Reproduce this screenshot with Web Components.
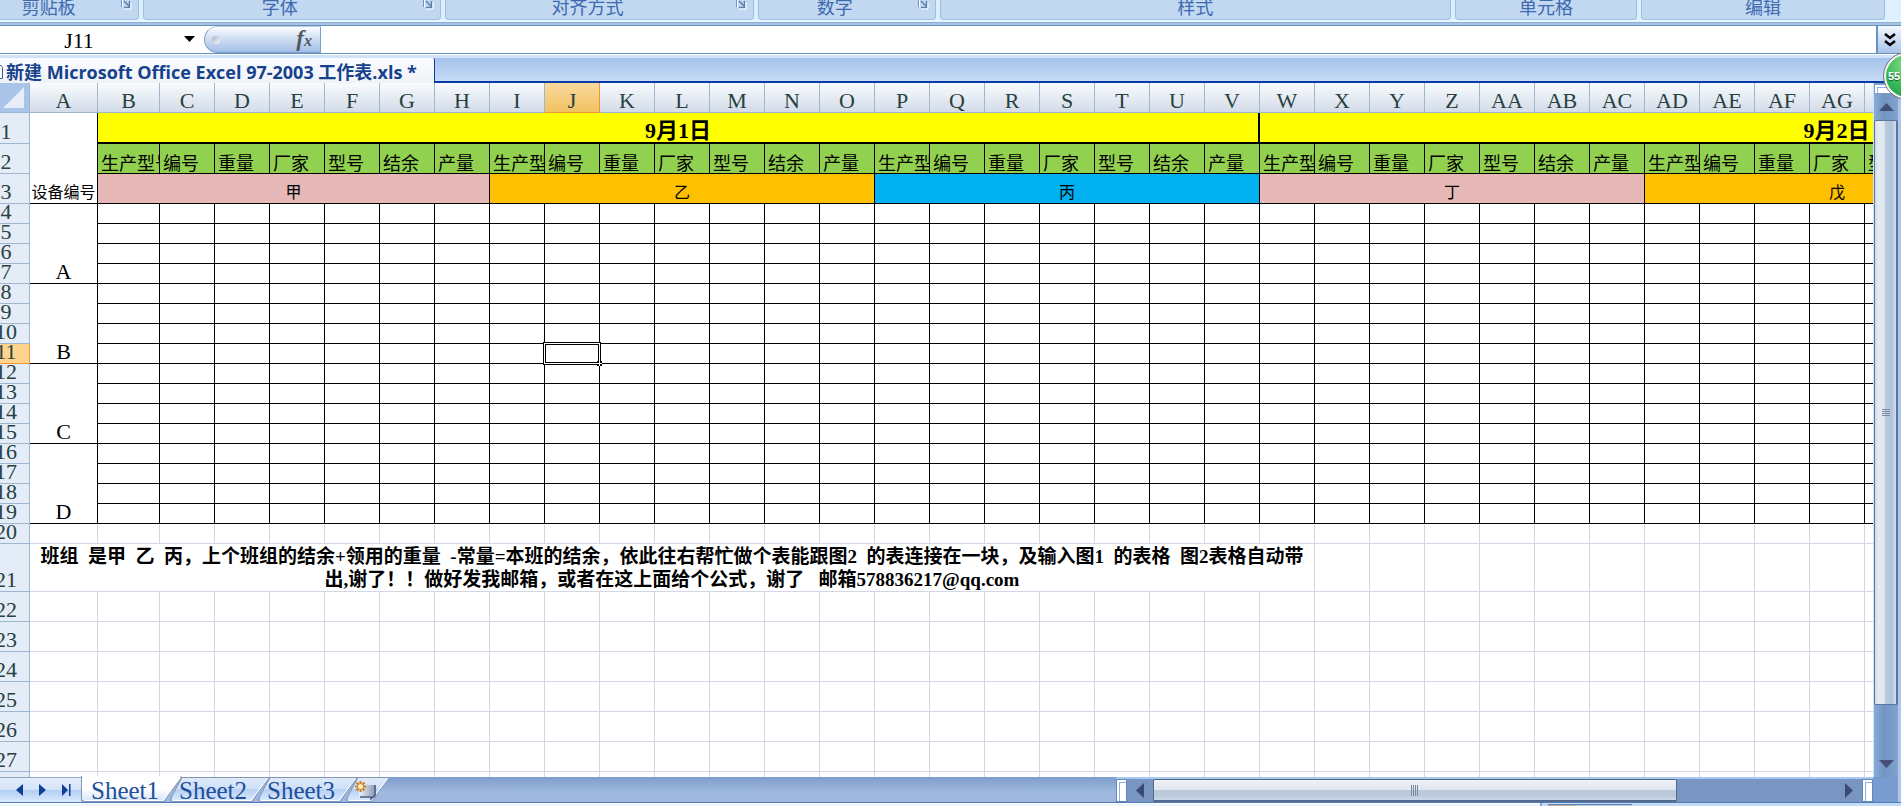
<!DOCTYPE html>
<html lang="zh-CN">
<head>
<meta charset="utf-8">
<title>Excel</title>
<style>
  html, body { height: 100%; margin: 0; }
  body {
    overflow: hidden;
    font-family: "Liberation Serif", "Noto Sans CJK SC", serif;
    font-size: 22px;
    --line: #6593bc;
    --navy: #15428b;
  }
</style>
</head>
<body>
<xl-window>
  <xl-ribbon slot="top">
    <xl-group launcher style="flex-grow: 155">剪贴板</xl-group>
    <xl-group launcher style="flex-grow: 299">字体</xl-group>
    <xl-group launcher style="flex-grow: 310">对齐方式</xl-group>
    <xl-group launcher style="flex-grow: 177">数字</xl-group>
    <xl-group style="flex-grow: 514">样式</xl-group>
    <xl-group style="flex-grow: 182">单元格</xl-group>
    <xl-group style="flex-grow: 244">编辑</xl-group>
  </xl-ribbon>
  <xl-formula-bar slot="top" cell="J11"></xl-formula-bar>
  <xl-doc-tabs slot="top">新建 Microsoft Office Excel 97-2003 工作表.xls *</xl-doc-tabs>
  <xl-grid slot="main"></xl-grid>
  <xl-scroll-y slot="main"></xl-scroll-y>
  <xl-sheet-bar slot="bottom"></xl-sheet-bar>
  <xl-status slot="bottom"></xl-status>
  <xl-badge slot="over">55</xl-badge>
</xl-window>

<script>
class XlElement extends HTMLElement {
  constructor() {
    super();
    this.attachShadow({ mode: 'open' });
    this.shadowRoot.innerHTML = `<style>
      *, :host { box-sizing: border-box; }
      button, input { font: inherit; color: inherit; margin: 0; padding: 0; border: 0; background: none; border-radius: 0; outline: 0; }
      svg { display: block; flex: none; }
    </style>` + this.render();
  }
}

customElements.define('xl-window', class extends XlElement {
  render() {
    return `
    <style>
      :host { display: flex; flex-direction: column; height: 100vh; position: relative; overflow: hidden; background: #afc8ec; }
      .main { flex: 1; min-height: 0; display: flex; overflow: hidden; }
    </style>
    <slot name="top"></slot>
    <div class="main"><slot name="main"></slot></div>
    <slot name="bottom"></slot>
    <slot name="over"></slot>`;
  }
});

customElements.define('xl-ribbon', class extends XlElement {
  render() {
    return `
    <style>
      :host {
        display: flex; gap: 4px; height: 25px; padding: 0 16px 5px 0; margin-left: -17px; flex: none;
        background: linear-gradient(#def0fd 0 20px, #e8f7ff 20px 22px, #8fb0d4 22px 23px, #a9c1e2 23px);
      }
    </style>
    <slot></slot>`;
  }
});

customElements.define('xl-group', class extends XlElement {
  render() {
    return `
    <style>
      :host {
        display: flex; flex: 1 1 0; min-width: 0; height: 20px;
        background: #c1d8f0; border: 1px solid #9dbfdf; border-top: 0; border-radius: 0 0 4px 4px;
        color: #3e6ab0; font: 18px/26px "Noto Sans CJK SC", sans-serif;
      }
      span { flex: 1; text-align: center; margin-top: -7px; white-space: nowrap; }
      button { display: none; width: 24px; padding: 0 0 0 6px; }
      :host([launcher]) button { display: block; }
    </style>
    <span><slot></slot></span>
    <button aria-label="launcher"><svg width="12" height="20" viewBox="0 0 12 20">
      <path d="M1.5 0v7" stroke="#6d93c4" fill="none"/><path d="M2.500 0v7" stroke="#fff"/>
      <path d="M4 1l5 5M9.500 1v6.500H4" stroke="#5c80aa" fill="none" stroke-width="1.500"/>
      <path d="M11 2v7H4" stroke="#fff" fill="none"/>
    </svg></button>`;
  }
});

customElements.define('xl-formula-bar', class extends XlElement {
  render() {
    return `
    <style>
      :host {
        display: flex; height: 33px; flex: none; background: #fff;
        border-top: 1px solid var(--line); border-bottom: 3px solid #cfe2f8;
        box-shadow: inset 0 -1px #fff, inset 0 -2px var(--line);
        padding-bottom: 2px;
      }
      .name { width: 158px; padding-top: 3px; text-align: center; }
      .drop { width: 46px; padding-left: 26px; }
      .fx {
        width: 117px; display: flex; align-items: center; justify-content: space-between; padding: 0 8px 0 7px;
        border: 1px solid #7d9fc9; border-top-color: #b6cbe6; border-radius: 14px 0 0 14px;
        background: linear-gradient(#fbfdff, #d5e2f4 40%, #a3bfe8);
      }
      .dot { width: 8px; height: 8px; border-radius: 50%; background: linear-gradient(135deg, #aab3c2, #f5f8fc); }
      i { font: italic bold 23px/24px "Liberation Serif", serif; color: #54585f; }
      i small { font-size: 16px; }
      .text { flex: 1; min-width: 0; }
      .more { width: 25px; padding-left: 6px; border-left: 2px solid var(--line); background: linear-gradient(#f4f8fe, #a9c3ea); }
    </style>
    <input class="name" aria-label="Name box" value="${this.getAttribute('cell')}">
    <button class="drop" aria-label="Names"><svg width="12" height="7"><path d="M0 0h11L5.500 6z"/></svg></button>
    <button class="fx" aria-label="Insert function"><span class="dot"></span><i>f<small>x</small></i></button>
    <input class="text" aria-label="Formula">
    <button class="more" aria-label="Expand"><svg width="12" height="14" viewBox="0 0 12 14">
      <path d="M1 1l5 4 5-4M1 8l5 4 5-4" fill="none" stroke="#000" stroke-width="2.500"/></svg></button>`;
  }
});

customElements.define('xl-doc-tabs', class extends XlElement {
  render() {
    return `
    <style>
      :host { display: flex; height: 25px; flex: none; background: linear-gradient(#a6c3ec, #c6daf4 23px, #0a3ca8 23px); }
      a {
        display: flex; align-items: center; gap: 3px; padding: 3px 17px 0 0; white-space: nowrap; text-decoration: none;
        background: linear-gradient(#fafcff, #f0f2f8); border-right: 1px solid #0a3ca8; border-top-right-radius: 2px;
        color: var(--navy); font: bold 18px/22px "Open Sans", "Noto Sans CJK SC", sans-serif;
      }
    </style>
    <a href="#"><svg width="3" height="16"><path d="M0 1.500h1l1.500 2v11H0" fill="#fff" stroke="#3c5a8c"/></svg><slot></slot></a>`;
  }
});

const letters = n => n < 26 ? String.fromCharCode(65 + n) : 'A' + String.fromCharCode(39 + n);
const FIELDS = ['生产型号', '编号', '重量', '厂家', '型号', '结余', '产量'];
const TEAMS = [['甲', 'pink'], ['乙', 'gold'], ['丙', 'blue'], ['丁', 'pink'], ['戊', 'gold'], ['己', 'blue']];
const COLS = 43;

customElements.define('xl-grid', class extends XlElement {
  render() {
    const times = (n, fn) => Array.from({ length: n }, (_, i) => fn(i)).join('');
    const rowHead = r => `<th scope="row"${r === 11 ? ' class="on"' : ''}>${r}</th>`;

    let body = `<tr class="tall r1">${rowHead(1)}<td class="dev" rowspan="3">设备编号</td>
      <td class="day" colspan="21">9月1日</td><td class="day" colspan="21">9月2日</td></tr>`;
    body += `<tr class="tall">${rowHead(2)}${times(42, i => `<td class="field">${FIELDS[i % 7]}</td>`)}</tr>`;
    body += `<tr class="tall">${rowHead(3)}${TEAMS.map(([t, c]) => `<td class="team ${c}" colspan="7">${t}</td>`).join('')}</tr>`;

    // machines A-D, four rows each
    for (let r = 4; r < 20; r++) {
      const first = r % 4 === 0 ? `<td class="machine" rowspan="4">${'ABCD'[r / 4 - 1]}</td>` : '';
      body += `<tr class="ruled">${rowHead(r)}${first}${times(42, i => r === 11 && i === 8
        ? '<td class="cursor"><span></span></td>' : '<td></td>')}</tr>`;
    }

    body += `<tr>${rowHead(20)}${times(COLS, () => '<td></td>')}</tr>`;
    body += `<tr class="note">${rowHead(21)}<td colspan="23">班组&nbsp; 是甲&nbsp; 乙&nbsp; 丙，上个班组的结余+领用的重量&nbsp; -常量=本班的结余，依此往右帮忙做个表能跟图2&nbsp; 的表连接在一块，及输入图1&nbsp; 的表格&nbsp; 图2表格自动带<br>出,谢了！！做好发我邮箱，或者在这上面给个公式，谢了&nbsp;&nbsp; 邮箱578836217@qq.com</td>${times(20, () => '<td></td>')}</tr>`;
    for (let r = 22; r < 29; r++) {
      body += `<tr class="tall">${rowHead(r)}${times(COLS, () => '<td></td>')}</tr>`;
    }

    return `
    <style>
      :host { display: block; flex: 1; min-width: 0; overflow: hidden; background: #fff; }
      table { table-layout: fixed; border-collapse: separate; border-spacing: 0; width: 0; margin-left: -17px; }
      .c0 { width: 47px; } .c1 { width: 68px; } .c2 { width: 62px; } .c { width: 55px; }
      th, td {
        height: 20px; padding: 0 0 3px; border: solid #d0d7e5; border-width: 0 1px 1px 0;
        line-height: 16px; vertical-align: bottom; white-space: nowrap; overflow: hidden;
      }
      th { font-weight: normal; color: #27413e; }
      thead th { height: 30px; border-color: #9eb6ce; background: linear-gradient(#f9fcfd, #d3dbe9); }
      thead th:first-child { background: #a9c4e9; padding: 0 4px 3px 0; }
      thead svg { margin-left: auto; }
      tbody th { border-color: #9eb6ce; background: #e4ecf7; }
      thead th.on { background: linear-gradient(#f9d99f, #f1c15f); border-color: #f29536; }
      tbody th.on { background: #ffd58d; border-color: #f29536; }
      .tall > * { height: 30px; }
      .r1 > * { height: 31px; }
      .dev, .machine { border-color: #000; text-align: center; }
      .dev { font-size: 16px; padding-bottom: 2px; }
      .day { background: #ff0; border: solid #000; border-width: 0 2px 2px 0; font-weight: bold; text-align: center; }
      .field { background: #92d050; border-color: #000; font-size: 18px; padding: 0 0 1px 3px; }
      .team { border-color: #000; font-size: 16px; text-align: center; padding-bottom: 2px; }
      .pink { background: #e6b8b7; }
      .gold { background: #ffc000; }
      .blue { background: #00b0f0; }
      .ruled td { border-color: #000; }
      .note th { height: 48px; }
      .note td { font-size: 19px; }
      .note td:nth-child(2) { font-weight: bold; line-height: 23px; padding: 1px 0 0; text-align: center; vertical-align: top; }
      .cursor { position: relative; overflow: visible; }
      .cursor span { position: absolute; inset: -2px; border: 3px double #000; background: #fff; }
      .cursor span::after {
        content: ""; position: absolute; right: -4px; bottom: -4px; width: 5px; height: 5px;
        background: linear-gradient(#fff, #fff) 2px 0 / 1px 5px no-repeat, linear-gradient(#fff, #fff) 0 2px / 5px 1px no-repeat, #000;
      }
    </style>
    <table>
      <colgroup><col class="c0"><col class="c1"><col class="c2">${times(41, () => '<col class="c">')}</colgroup>
      <thead><tr><th aria-label="Select all"><svg width="22" height="22"><path d="M21 0v21H0z" fill="#e6edf8"/></svg></th>
      ${times(COLS, i => `<th scope="col"${i === 9 ? ' class="on"' : ''}>${letters(i)}</th>`)}</tr></thead>
      <tbody>${body}</tbody>
    </table>`;
  }
});

customElements.define('xl-scroll-y', class extends XlElement {
  render() {
    return `
    <style>
      :host {
        display: flex; flex-direction: column; width: 28px; flex: none; padding: 1px 3px 0 1px;
        background: linear-gradient(90deg, #cfe2fb 1px, transparent 1px 25px, #afc6ec 25px), linear-gradient(90deg, #8cadd9, #7094c1 40%, #86a6cf);
      }
      .split { height: 10px; background: #fff; border: 1px solid #7f9dc6; box-shadow: inset 2px 2px #fff, inset 3px 3px #8eaee0; }
      .arrow { height: 26px; display: flex; align-items: center; justify-content: center; }
      .thumb {
        flex: 583; border: 1px solid #5b76a2; border-right-width: 2px; border-radius: 2px;
        display: flex; align-items: center; justify-content: center;
        background: linear-gradient(90deg, #cfd9e6, #e4ebf1 15%, #dde5ee 45%, #b8c8de 50%, #b3c3da 80%, #d5dfea);
      }
      .rest { flex: 46; }
    </style>
    <div class="split"></div>
    <button class="arrow" aria-label="Up"><svg width="15" height="8"><path d="M0 8l7.500-8L15 8z" fill="#454e75"/></svg></button>
    <button class="thumb" aria-label="Scroll"><svg width="8" height="8"><path d="M0 .5h8M0 2.500h8M0 4.500h8M0 6.500h8" stroke="#808aa0"/></svg></button>
    <div class="rest"></div>
    <button class="arrow" aria-label="Down"><svg width="15" height="8"><path d="M0 0h15L7.500 8z" fill="#454e75"/></svg></button>`;
  }
});

customElements.define('xl-sheet-tab', class extends XlElement {
  render() {
    const active = this.hasAttribute('active');
    const w = this.hasAttribute('add') ? 32 : 88;
    const left = active ? 'M.5 -1V23L3 24.500' : 'M13 .5L3 19Q1 24.500 4 24.500';
    return `
    <style>
      :host { display: block; flex: none; width: ${w}px; height: 25px; }
      button { position: relative; display: block; width: 100%; height: 25px; padding: 2px 0 0 10px; text-align: left; color: #1e4f9b; font-size: 25px; line-height: 24px; white-space: nowrap; }
      .shape { position: absolute; left: 0; top: 0; overflow: visible; }
      span { position: relative; }
    </style>
    <button><svg class="shape" width="${w + 13}" height="25">
      <defs><linearGradient id="g" x2="0" y2="1">${active
        ? '<stop offset=".5" stop-color="#fff"/><stop offset="1" stop-color="#d3e2f6"/>'
        : '<stop offset="0" stop-color="#dfeafa"/><stop offset=".5" stop-color="#cfe0f8"/><stop offset=".5" stop-color="#b7d1f5"/><stop offset="1" stop-color="#dceafc"/>'}</linearGradient></defs>
      <path d="${left}H${w - 5}L${w + 12} .5${active ? 'V-1' : 'Z'}" fill="url(#g)" stroke="#8296b4"/>
      <path d="M4 23.500H${w - 6}L${w + 11} 1" fill="none" stroke="#fff"/>
    </svg><span><slot></slot></span></button>`;
  }
});

customElements.define('xl-sheet-bar', class extends XlElement {
  render() {
    return `
    <style>
      :host { display: flex; height: 26px; flex: none; border-bottom: 1px solid #4f7cb8; background: linear-gradient(#7d9ccc, #9fb9df 60%, #9cb6dc); }
      .nav { width: 81px; display: flex; align-items: center; gap: 16px; padding-left: 16px; border-top: 1px solid #8ea5c8; background: linear-gradient(#e3edfb, #d5e3f8 50%, #b0cdf5 50%, #dbe9fc); }
      .nav button { flex: none; }
      .space { flex: 1; }
      .scroll { width: 39.8%; display: flex; border-top: 2px solid #a9c8f0; background: #7896c1; }
      .split { width: 11px; background: #fff; border: 1px solid #6688b8; box-shadow: inset 2px 2px #fff, inset 3px 3px #8eaee0; }
      .arrow { width: 26px; display: flex; align-items: center; justify-content: center; }
      .thumb {
        flex: 523; display: flex; align-items: center; justify-content: center; border: 1px solid #54688c; border-bottom-width: 2px; border-radius: 2px;
        background: linear-gradient(#eef1f7, #e0e6ef 48%, #bccadb 50%, #b9c9dc 75%, #cbd8e6);
      }
      .rest { flex: 160; }
      .corner { width: 28px; background: #799cd0; border-right: 3px solid #afc6ec; }
    </style>
    <div class="nav">
      <button aria-label="Previous"><svg width="7" height="12"><path d="M7 0v12L0 6z" fill="#0f3f94"/></svg></button>
      <button aria-label="Next"><svg width="7" height="12"><path d="M0 0v12l7-6z" fill="#0f3f94"/></svg></button>
      <button aria-label="Last"><svg width="9" height="12"><path d="M0 0v12l6-6zM7 0h1.500v12H7z" fill="#0f3f94"/></svg></button>
    </div>
    <xl-sheet-tab active>Sheet1</xl-sheet-tab>
    <xl-sheet-tab>Sheet2</xl-sheet-tab>
    <xl-sheet-tab>Sheet3</xl-sheet-tab>
    <xl-sheet-tab add><svg width="22" height="20" viewBox="0 0 22 20">
      <defs><linearGradient id="s"><stop offset="0" stop-color="#eef1f6"/><stop offset="1" stop-color="#8596b5"/></linearGradient></defs>
      <path d="M4 4h17v13h-4l-1-1H4z" fill="url(#s)"/><path d="M5 16h11v2l4-4V4" fill="none" stroke="#4c5c80" stroke-width="1.500"/>
      <path d="M5.500 0v11M0 5.500h11M1.500 1.500l8 8M9.500 1.500l-8 8" stroke="#d17c1c" stroke-width="2"/><circle cx="5.500" cy="5.500" r="2.500" fill="#fff1b8"/>
    </svg></xl-sheet-tab>
    <div class="space"></div>
    <div class="scroll">
      <div class="split"></div>
      <button class="arrow" aria-label="Left"><svg width="8" height="15"><path d="M8 0v15L0 7.500z" fill="#3c4a73"/></svg></button>
      <button class="thumb" aria-label="Scroll"><svg width="8" height="11"><path d="M.5 0v11M2.500 0v11M4.500 0v11M6.500 0v11" stroke="#7d879b"/></svg></button>
      <div class="rest"></div>
      <button class="arrow" aria-label="Right"><svg width="8" height="15"><path d="M0 0v15l8-7.500z" fill="#3c4a73"/></svg></button>
      <div class="split"></div>
    </div>
    <div class="corner"></div>`;
  }
});

customElements.define('xl-status', class extends XlElement {
  render() {
    return `
    <style>
      :host { display: flex; height: 3px; flex: none; background: #edf5fe; }
      .left { flex: 1; border-top: 1px solid #fff; }
      .views { width: 19%; padding: 1px 0 0 6px; border-left: 2px solid #86a8d3; background: #c4dbf6; }
      .views div { width: 84px; height: 2px; background: linear-gradient(90deg, #bfae98 28px, #b7cdea 28px); border-top: 1px solid #5d83b8; }
    </style>
    <div class="left"></div><div class="views"><div></div></div>`;
  }
});

customElements.define('xl-badge', class extends XlElement {
  render() {
    return `
    <style>
      :host {
        position: absolute; right: -29px; top: 53px; width: 46px; height: 46px; padding-left: 2px;
        border: 2px solid #f4f4f4; border-radius: 50%; outline: 1px solid #777;
        background: radial-gradient(circle at 50% 25%, #8be08d, #35b857 60%, #229345);
        color: #fff; font: bold 11px/42px "Liberation Sans", sans-serif; text-shadow: 0 1px 1px #145c2a;
      }
    </style>
    <slot></slot>`;
  }
});
</script>
</body>
</html>
